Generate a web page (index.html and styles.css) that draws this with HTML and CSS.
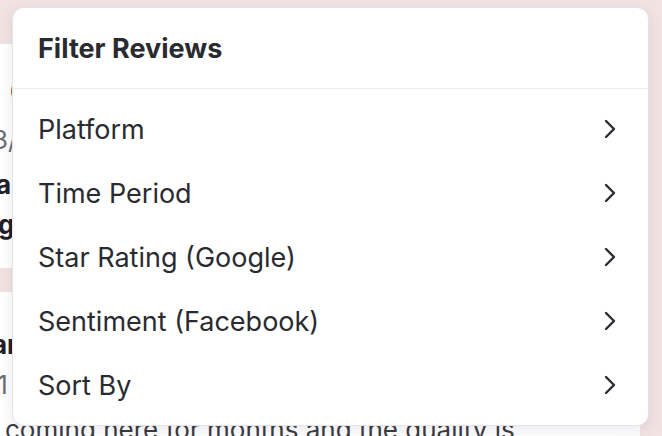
FILE: index.html
```html
<!DOCTYPE html>
<html>
<head>
<meta charset="utf-8">
<link rel="stylesheet" href="styles.css">
</head>
<body>
<div class="page">
  <div class="band"></div>
  <div class="card card-one">
    <div class="line name">(</div>
    <div class="line date">3/12/2024</div>
    <div class="line strong l3">a</div>
    <div class="line strong l4">g</div>
  </div>
  <div class="gap"></div>
  <div class="card card-two">
    <div class="line strong l5">ar</div>
    <div class="line date d2">/1</div>
    <div class="line body-text">coming here for months and the quality is</div>
  </div>
</div>

<div class="menu">
  <div class="menu-header">Filter Reviews</div>
  <ul class="menu-list">
    <li class="menu-item"><span>Platform</span><svg class="chev" viewBox="0 0 12 20"><path d="M2 2 L10 10 L2 18"/></svg></li>
    <li class="menu-item"><span>Time Period</span><svg class="chev" viewBox="0 0 12 20"><path d="M2 2 L10 10 L2 18"/></svg></li>
    <li class="menu-item"><span>Star Rating (Google)</span><svg class="chev" viewBox="0 0 12 20"><path d="M2 2 L10 10 L2 18"/></svg></li>
    <li class="menu-item"><span>Sentiment (Facebook)</span><svg class="chev" viewBox="0 0 12 20"><path d="M2 2 L10 10 L2 18"/></svg></li>
    <li class="menu-item"><span>Sort By</span><svg class="chev" viewBox="0 0 12 20"><path d="M2 2 L10 10 L2 18"/></svg></li>
  </ul>
</div>
</body>
</html>
```
FILE: styles.css
```css
html, body {
  margin: 0;
  padding: 0;
  width: 662px;
  height: 436px;
  overflow: hidden;
  background: #f2e3e3;
  font-family: Inter, "Liberation Sans", sans-serif;
  color: #2a2b30;
}

.page {
  width: 640px;
  height: 436px;
  display: flex;
  flex-direction: column;
  overflow: hidden;
}

.band {
  height: 44px;
  flex: none;
}

.card {
  background: #ffffff;
  display: flex;
  flex-direction: column;
  overflow: hidden;
  box-sizing: border-box;
  flex: none;
}

.card-one {
  height: 224px;
  padding-top: 30px;
}

.gap {
  height: 24px;
  flex: none;
}

.card-two {
  height: 200px;
  padding-top: 37px;
}

.line {
  white-space: nowrap;
  font-size: 26px;
  line-height: 32px;
  height: 32px;
  flex: none;
}

.name {
  margin-left: 9px;
  font-size: 22px;
  color: #2a2b30;
}

.date {
  color: #6b6e76;
  margin-top: 18px;
  margin-left: -8px;
}

.strong {
  font-weight: 700;
  color: #1f2127;
}

.l3 {
  margin-left: -4px;
  margin-top: 13px;
}

.l4 {
  margin-top: 8px;
  margin-left: -2px;
}

.l5 {
  margin-left: -8px;
}

.d2 {
  margin-top: 8px;
  margin-left: -12px;
}

.body-text {
  margin-left: 5px;
  margin-top: 13px;
  color: #3a3c42;
}

.menu {
  position: absolute;
  left: 12px;
  top: 7px;
  width: 637px;
  height: 419px;
  box-sizing: border-box;
  background: #ffffff;
  border: 1px solid #e4e4ea;
  border-radius: 12px;
  box-shadow: 0 4px 14px rgba(60, 40, 70, 0.10);
  display: flex;
  flex-direction: column;
}

.menu-header {
  height: 81px;
  flex: none;
  box-sizing: border-box;
  padding-left: 25px;
  display: flex;
  align-items: center;
  font-size: 27px;
  font-weight: 700;
  border-bottom: 1px solid #eeeef0;
}

.menu-list {
  list-style: none;
  margin: 0;
  padding: 8px 0;
}

.menu-item {
  height: 64px;
  display: flex;
  align-items: center;
  justify-content: space-between;
  padding: 0 32px 0 25px;
  font-size: 27px;
}

.chev {
  width: 12px;
  height: 20px;
  fill: none;
  stroke: #2a2b30;
  stroke-width: 2.4;
  stroke-linecap: round;
  stroke-linejoin: round;
}
```
